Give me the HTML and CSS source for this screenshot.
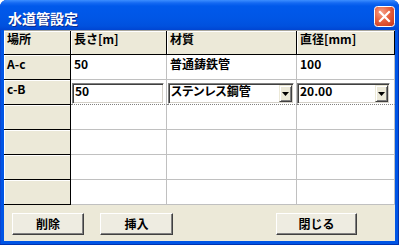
FILE: index.html
```html
<!DOCTYPE html>
<html lang="ja">
<head>
<meta charset="utf-8">
<title>水道管設定</title>
<link rel="stylesheet" href="styles.css">
</head>
<body>
<div class="window">
  <div class="titlebar">
    <span class="title">水道管設定</span>
    <span class="close" aria-label="閉じる">
      <svg width="21" height="21" viewBox="0 0 21 21">
        <defs>
          <radialGradient id="cg" cx="0.35" cy="0.3" r="0.9">
            <stop offset="0" stop-color="#F6A38C"/>
            <stop offset="0.45" stop-color="#E8623F"/>
            <stop offset="1" stop-color="#C8361A"/>
          </radialGradient>
        </defs>
        <rect x="0.5" y="0.5" width="20" height="20" rx="3" ry="3" fill="url(#cg)" stroke="#FFFFFF" stroke-width="1"/>
        <path d="M6 6 L15 15 M15 6 L6 15" stroke="#FFFFFF" stroke-width="2.2" stroke-linecap="square"/>
      </svg>
    </span>
  </div>
  <div class="client">
    <div class="grid">
      <div class="c h first">場所</div>
      <div class="c h">長さ[m]</div>
      <div class="c h">材質</div>
      <div class="c h">直径[mm]</div>

      <div class="c rh">A-c</div>
      <div class="c d">50</div>
      <div class="c d">普通鋳鉄管</div>
      <div class="c d">100</div>

      <div class="c rh">c-B</div>
      <div class="c d edit">
        <div class="field input">50</div>
      </div>
      <div class="c d edit">
        <div class="field select sel1"><span class="val">ステンレス鋼管</span><span class="drop"><svg width="7" height="4" viewBox="0 0 7 4"><polygon points="0,0 7,0 3.5,4" fill="#000"/></svg></span></div>
      </div>
      <div class="c d edit">
        <div class="field select sel2"><span class="val">20.00</span><span class="drop"><svg width="7" height="4" viewBox="0 0 7 4"><polygon points="0,0 7,0 3.5,4" fill="#000"/></svg></span></div>
      </div>

      <div class="c rh"></div><div class="c d"></div><div class="c d"></div><div class="c d"></div>
      <div class="c rh"></div><div class="c d"></div><div class="c d"></div><div class="c d"></div>
      <div class="c rh"></div><div class="c d"></div><div class="c d"></div><div class="c d"></div>
      <div class="c rh"></div><div class="c d"></div><div class="c d"></div><div class="c d"></div>
    </div>
    <div class="buttons">
      <button class="btn b1">削除</button>
      <button class="btn b2">挿入</button>
      <button class="btn b3">閉じる</button>
    </div>
  </div>
</div>
</body>
</html>
```

FILE: styles.css
```css
* {
  box-sizing: border-box;
}

html, body {
  margin: 0;
  padding: 0;
  background: #ffffff;
}

body {
  width: 399px;
  height: 245px;
  overflow: hidden;
  font-family: "Noto Sans CJK JP", "Noto Sans", sans-serif;
  font-size: 12px;
  font-weight: bold;
  color: #000;
}

.window {
  width: 399px;
  height: 245px;
  display: flex;
  flex-direction: column;
  background: #0055E5;
  border-radius: 7px 7px 0 0;
  box-shadow: inset -1px -1px 0 #0033B0, inset 1px 0 0 #0A45D0;
}

.titlebar {
  flex: 0 0 30px;
  height: 30px;
  display: flex;
  align-items: flex-start;
  padding: 0 4px 0 8px;
  border-radius: 7px 7px 0 0;
  background: linear-gradient(to bottom,
    #3C8EFF 0px, #1469F2 3px, #0059EB 6px, #0056E6 18px, #0051DE 26px, #0045D2 30px);
}

.title {
  color: #ffffff;
  font-size: 14px;
  line-height: 18px;
  margin-top: 9px;
  text-shadow: 1px 1px 0 #0B2A8C;
}

.close {
  margin-left: auto;
  margin-top: 6px;
  width: 21px;
  height: 21px;
  display: block;
}

.close svg {
  display: block;
}

.client {
  flex: 1;
  margin: 0 4px 4px 4px;
  background: #ECE9D8;
  display: flex;
  flex-direction: column;
}

.grid {
  display: grid;
  grid-template-columns: 67px 96px 130px 98px;
  grid-template-rows: 24px repeat(6, 25px);
  border-top: 1px solid #A7A69E;
}

.c {
  background: #ffffff;
  border-right: 1px solid #C0C0C0;
  border-bottom: 1px solid #C0C0C0;
  padding: 1px 0 0 3px;
  line-height: 16px;
  white-space: nowrap;
}

.h {
  background: #ECE9D8;
  border-right-color: #000000;
  border-bottom-color: #000000;
  box-shadow: inset 1px 1px 0 #ffffff;
  padding-top: 0;
}

.rh {
  background: #ECE9D8;
  border-right-color: #000000;
  border-bottom-color: #000000;
  box-shadow: inset 1px 1px 0 #ffffff;
}

.edit {
  padding: 3px 0 0 0;
  border-bottom: 1px dotted #808080;
}

.field {
  height: 21px;
  background: #ffffff;
  border: 1px solid;
  border-color: #808080 #ffffff #ffffff #808080;
  box-shadow: inset 1px 1px 0 #404040, inset -1px -1px 0 #D4D0C8;
  line-height: 14px;
  padding: 0 0 0 2px;
}

.input {
  margin-left: 1px;
  width: 92px;
}

.select {
  display: flex;
  align-items: flex-start;
}

.sel1 {
  margin-left: 1px;
  width: 126px;
}

.sel2 {
  margin-left: 0;
  width: 93px;
}

.val {
  flex: 1;
  font-feature-settings: "palt";
}

.drop {
  width: 13px;
  height: 17px;
  margin: 1px 1px 0 0;
  background: #ECE9D8;
  border: 1px solid;
  border-color: #ECE9D8 #404040 #404040 #ECE9D8;
  box-shadow: inset 1px 1px 0 #ffffff, inset -1px -1px 0 #808080;
  display: flex;
  align-items: center;
  justify-content: center;
}

.drop svg {
  display: block;
}

.buttons {
  display: flex;
  gap: 16px;
  padding: 8px 38px 0 8px;
}

.btn {
  height: 22px;
  padding: 0;
  margin: 0;
  font: inherit;
  font-weight: bold;
  color: #000;
  background: #EEECE1;
  border: 1px solid;
  border-color: #ffffff #404040 #404040 #ffffff;
  box-shadow: inset -1px -1px 0 #808080;
  display: flex;
  align-items: center;
  justify-content: center;
  line-height: 16px;
}

.b1 { width: 72px; }
.b2 { width: 73px; }
.b3 { width: 81px; margin-left: auto; }
```
